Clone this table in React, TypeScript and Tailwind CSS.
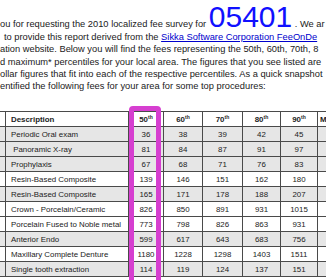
const rows: { name: string; v: number[]; shade: boolean }[] = [
  { name: "Periodic Oral exam", v: [36, 38, 39, 42, 45], shade: true },
  { name: "\u00a0Panoramic X-ray", v: [81, 84, 87, 91, 97], shade: true },
  { name: "Prophylaxis", v: [67, 68, 71, 76, 83], shade: true },
  { name: "Resin-Based Composite", v: [139, 146, 151, 162, 180], shade: false },
  { name: "Resin-Based Composite", v: [165, 171, 178, 188, 207], shade: true },
  { name: "Crown - Porcelain/Ceramic", v: [826, 850, 891, 931, 1015], shade: false },
  { name: "Porcelain Fused to Noble metal", v: [773, 798, 826, 863, 931], shade: false },
  { name: "Anterior Endo", v: [599, 617, 643, 683, 756], shade: true },
  { name: "Maxillary Complete Denture", v: [1180, 1228, 1298, 1403, 1511], shade: false },
  { name: "Single tooth extraction", v: [114, 119, 124, 137, 151], shade: true },
];

const pcts = ["50", "60", "70", "80", "90"];

export default function App() {
  return (
    <div className="relative h-[280px] w-[326px] overflow-hidden bg-white font-['Liberation_Sans',Arial,sans-serif] text-[#1a1a1a]">
      <div className="text-[9.3px] leading-[12.3px] whitespace-nowrap">
        <div className="mt-[2px] flex h-[29px] items-baseline">
          <span>ou for requesting the 2010 localized fee survey for&nbsp;</span>
          <span className="text-[30px] leading-none text-[#1010ff]">05401</span>
          <span>&nbsp;. We ar</span>
        </div>
        <div className="pl-[4px]">
          to provide this report derived from the{" "}
          <a href="#" className="text-[#0000cc] underline">
            Sikka Software Corporation FeeOnDe
          </a>
        </div>
        <div>ation website. Below you will find the fees representing the 50th, 60th, 70th, 8</div>
        <div>d maximum* percentiles for your local area. The figures that you see listed are</div>
        <div>ollar figures that fit into each of the respective percentiles. As a quick snapshot</div>
        <div>entified the following fees for your area for some top procedures:</div>
      </div>

      <table className="mt-[19px] ml-[-15px] w-[372px] max-w-none table-fixed border-collapse text-[7.9px] text-[#222]">
        <colgroup>
          <col className="w-[20px]" />
          <col className="w-[123px]" />
          <col className="w-[35px]" />
          <col className="w-[39px]" />
          <col className="w-[40px]" />
          <col className="w-[38px]" />
          <col className="w-[37px]" />
          <col className="w-[40px]" />
        </colgroup>
        <tbody>
          <tr className="h-[15px]">
            <td className="border border-[#4a4a4a] p-0" />
            <td className="border border-[#4a4a4a] p-0 pl-[5px] font-bold">Description</td>
            {pcts.map((p) => (
              <td key={p} className="border border-[#4a4a4a] p-0 text-center font-bold">
                {p}
                <sup className="text-[5px]">th</sup>
              </td>
            ))}
            <td className="border border-[#4a4a4a] p-0 pl-[2px] font-bold">M</td>
          </tr>
          {rows.map((r, i) => (
            <tr key={i} className={r.shade ? "h-[15px] bg-[#e6e6e6]" : "h-[15px] bg-white"}>
              <td className="border border-[#4a4a4a] p-0" />
              <td className="border border-[#4a4a4a] p-0 pl-[5px] whitespace-nowrap">{r.name}</td>
              {r.v.map((n, j) => (
                <td key={j} className="border border-[#4a4a4a] p-0 text-center">
                  {n}
                </td>
              ))}
              <td className="border border-[#4a4a4a] p-0" />
            </tr>
          ))}
        </tbody>
      </table>

      <div className="absolute top-[106px] left-[129px] h-[190px] w-[32px] rounded-[4px] border-[5px] border-[#d63fd0]" />
    </div>
  );
}
